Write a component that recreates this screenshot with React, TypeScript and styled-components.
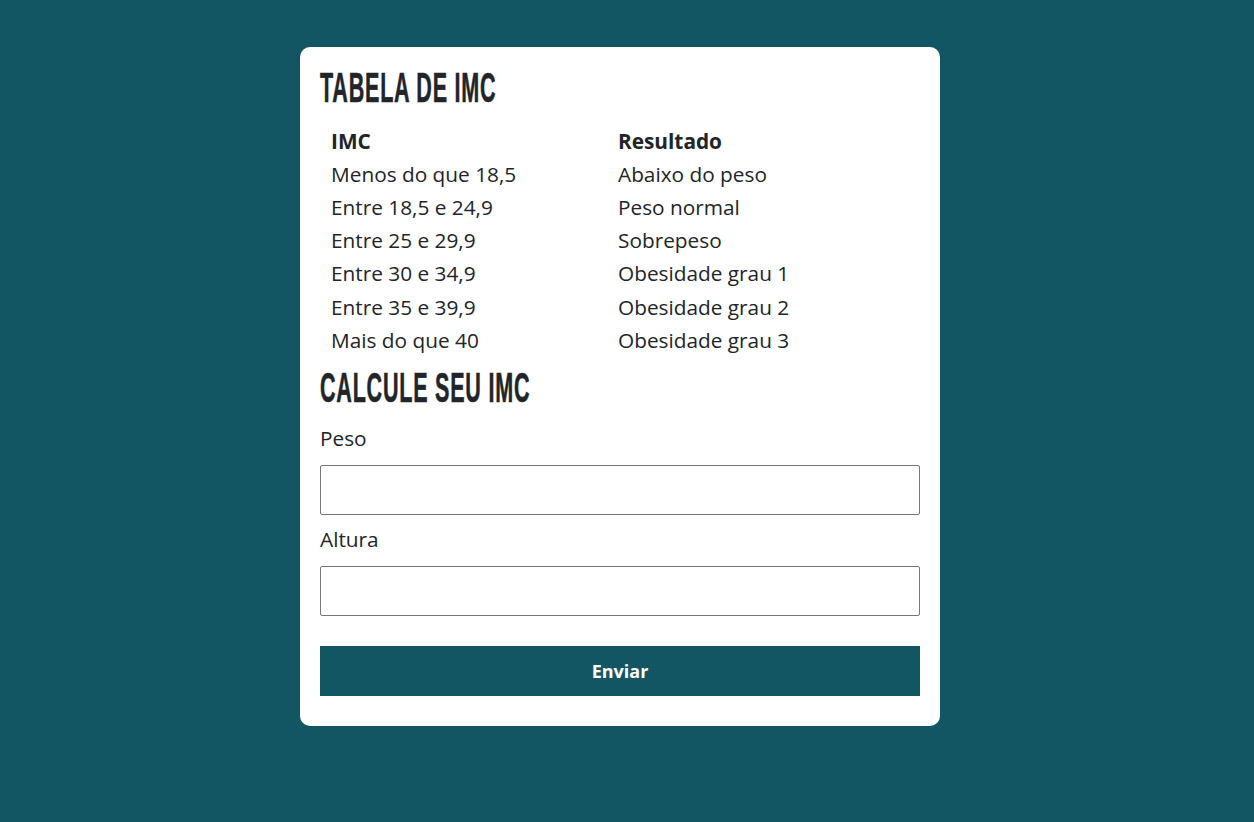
import React from "react";
import styled, { createGlobalStyle } from "styled-components";

const GlobalStyle = createGlobalStyle`
  * { box-sizing: border-box; }
  html, body { margin: 0; padding: 0; }
  body {
    background: #125664;
    font-family: "Open Sans", "Liberation Sans", sans-serif;
    color: #212529;
    min-height: 822px;
  }
`;

const Page = styled.main`
  display: flex;
  justify-content: center;
  padding-top: 47px;
  padding-right: 14px;
`;

const Card = styled.section`
  width: 640px;
  background: #ffffff;
  border-radius: 10px;
  padding: 20px 20px 30px;
  display: flex;
  flex-direction: column;
`;

const Title = styled.h1<{ $gapTop?: number }>`
  margin: ${(p) => p.$gapTop ?? 0}px 0 0;
  height: 42px;
  font-family: "Liberation Sans Narrow", "Liberation Sans", sans-serif;
  font-weight: 700;
  font-size: 42px;
  line-height: 42px;
  letter-spacing: 1.5px;
  text-transform: uppercase;
  color: #212529;
  white-space: nowrap;
  -webkit-text-stroke: 0.6px #212529;
  transform: scaleX(0.513);
  transform-origin: left center;
`;

const Table = styled.div`
  margin-top: 15px;
  display: grid;
  grid-template-columns: 287px 1fr;
  grid-auto-rows: 33.2px;
  font-size: 20.8px;
`;

const Cell = styled.div<{ $head?: boolean }>`
  padding-left: 11px;
  display: flex;
  align-items: center;
  font-weight: ${(p) => (p.$head ? 700 : 400)};
  white-space: nowrap;
`;

const Form = styled.form`
  display: flex;
  flex-direction: column;
`;

const Label = styled.label<{ $gapTop: number }>`
  margin-top: ${(p) => p.$gapTop}px;
  font-size: 20.8px;
  line-height: 30px;
  height: 30px;
`;

const Input = styled.input`
  margin-top: 12px;
  width: 600px;
  height: 50px;
  border: 1px solid #767676;
  border-radius: 2px;
  background: #fff;
  font-family: inherit;
  font-size: 18px;
  padding: 0 10px;
  outline: none;
`;

const Button = styled.button`
  margin-top: 30px;
  width: 600px;
  height: 50px;
  border: none;
  border-radius: 0;
  background: #125664;
  color: #ffffff;
  font-family: "Open Sans", "Liberation Sans", sans-serif;
  font-weight: 700;
  font-size: 18px;
  cursor: pointer;
`;

const rows: [string, string][] = [
  ["Menos do que 18,5", "Abaixo do peso"],
  ["Entre 18,5 e 24,9", "Peso normal"],
  ["Entre 25 e 29,9", "Sobrepeso"],
  ["Entre 30 e 34,9", "Obesidade grau 1"],
  ["Entre 35 e 39,9", "Obesidade grau 2"],
  ["Mais do que 40", "Obesidade grau 3"],
];

export default function App() {
  return (
    <>
      <GlobalStyle />
      <Page>
        <Card>
          <Title>Tabela de IMC</Title>
          <Table>
            <Cell $head>IMC</Cell>
            <Cell $head>Resultado</Cell>
            {rows.map(([a, b]) => (
              <React.Fragment key={a}>
                <Cell>{a}</Cell>
                <Cell>{b}</Cell>
              </React.Fragment>
            ))}
          </Table>
          <Title $gapTop={11}>Calcule seu IMC</Title>
          <Form onSubmit={(e) => e.preventDefault()}>
            <Label $gapTop={14} htmlFor="peso">Peso</Label>
            <Input id="peso" type="text" />
            <Label $gapTop={9} htmlFor="altura">Altura</Label>
            <Input id="altura" type="text" />
            <Button type="submit">Enviar</Button>
          </Form>
        </Card>
      </Page>
    </>
  );
}
